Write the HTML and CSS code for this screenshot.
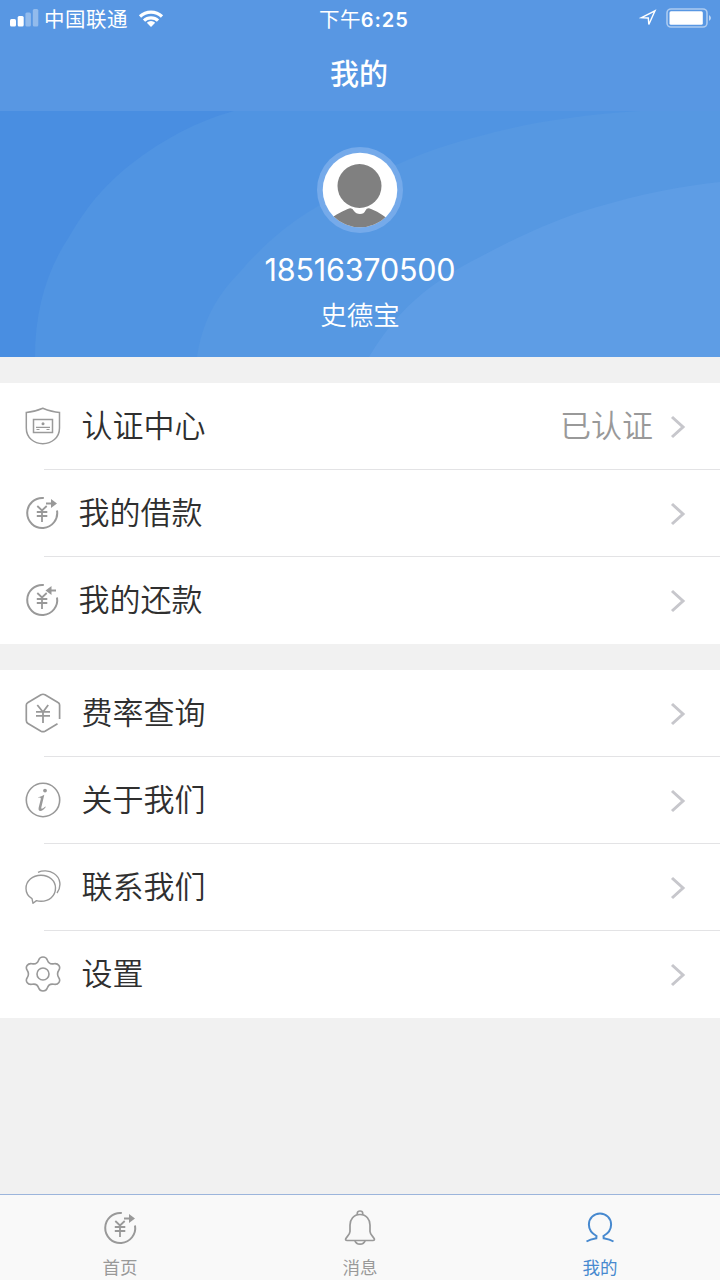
FILE: index.html
```html
<!DOCTYPE html>
<html lang="zh-CN">
<head>
<meta charset="utf-8">
<title>我的</title>
<link rel="stylesheet" href="styles.css">
</head>
<body>
<svg width="0" height="0" class="defs">
  <symbol id="chevron" viewBox="0 0 16 26"><path d="M2 3l11 10L2 23" fill="none" stroke="#c7c7cc" stroke-width="3"/></symbol>
  <symbol id="yen-out" viewBox="0 0 36 36"><g fill="none" stroke="currentColor" stroke-width="2"><path d="M18.8 3.1A15 15 0 1 0 32 15.500"/><path d="M12.300 11l4.700 4.500 4.700-4.500M11.800 17h10.500M11.800 21h10.500M17 15.500v11.500" stroke-width="1.800"/><path d="M21 8.500h7"/></g><path d="M26 4l6 4.500-6 4.500z" fill="currentColor"/></symbol>
  <symbol id="yen-in" viewBox="0 0 36 36"><g fill="none" stroke="currentColor" stroke-width="2"><path d="M18.800 3.100A15 15 0 1 0 32 15.500"/><path d="M12.300 11l4.700 4.500 4.700-4.500M11.800 17h10.500M11.800 21h10.500M17 15.500v11.500" stroke-width="1.800"/><path d="M25 8.500h6"/></g><path d="M26.500 4l-6 4.500 6 4.500z" fill="currentColor"/></symbol>
</svg>
<div class="app">
  <div class="top">
    <div class="status">
      <div class="carrier">
        <svg class="signal" width="29" height="18" viewBox="0 0 29 18"><g fill="#fff"><rect x="0" y="10" width="6" height="7.500" rx="1.500"/><rect x="7.700" y="7" width="6" height="10.500" rx="1.500"/><g opacity=".35"><rect x="15.400" y="3.500" width="5.500" height="14" rx="1.500"/><rect x="22.800" y="0" width="5.500" height="17.500" rx="1.500"/></g></g></svg>
        <span>中国联通</span>
        <svg class="wifi" width="26" height="19" viewBox="0 0 26 19"><path d="M2 7.500a16 16 0 0 1 22 0M6 11.700a10 10 0 0 1 14 0" fill="none" stroke="#fff" stroke-width="3.200"/><path d="M13 18l-4.200-4.200a6 6 0 0 1 8.400 0z" fill="#fff"/></svg>
      </div>
      <div class="clock">下午<b>6:25</b></div>
      <div class="power">
        <svg width="18" height="18" viewBox="0 0 18 18"><path d="M2.500 8.600L16 1.800 9.800 15.500 9.300 9z" fill="none" stroke="#fff" stroke-width="1.400"/></svg>
        <svg width="46" height="20" viewBox="0 0 46 20"><rect x="1" y="1" width="40" height="18" rx="4" fill="none" stroke="#fff" stroke-opacity=".5" stroke-width="1.600"/><rect x="3.500" y="3.300" width="33.300" height="13.500" rx="1.500" fill="#fff"/><path d="M43 7q4 3 0 6z" fill="#fff" opacity=".6"/></svg>
      </div>
    </div>
    <div class="title">我的</div>
  </div>
  <div class="hero">
    <svg class="arcs" viewBox="0 111 720 246" width="720" height="246">
      <path d="M35 357C35 310 47 270 69 237C88 205 100 192 117 176C150 147 190 123 234 111H720V357z" fill="#5094e2"/>
      <path d="M197 357C202 324 215 297 240 272C262 246 285 226 315 208C344 190 372 174 403 162C428 151 452 143 480 136C530 122 580 115 640 111H720V357z" fill="#5698e2"/>
      <path d="M369 357C384 332 401 311 423 293C442 278 460 267 480 257C515 238 556 219 597 207C638 195 680 186 720 182V357z" fill="#5e9de5"/>
    </svg>
    <svg class="avatar" width="86" height="86" viewBox="0 0 86 86"><defs><clipPath id="face"><circle cx="43" cy="43" r="37.300"/></clipPath></defs><circle cx="43" cy="43" r="43" fill="#75aaea"/><circle cx="43" cy="43" r="37.300" fill="#fff"/><g clip-path="url(#face)" fill="#808080"><circle cx="42.500" cy="39" r="22"/><path d="M12 73C18 68 27 63 33 61.200Q35.500 60.800 37 64Q39 67 43 67Q47 67 48.500 63.500Q49.500 61 52 61.200C59 63.500 67 68 74 75V86H12z"/></g></svg>
    <div class="phone">18516370500</div>
    <div class="name">史德宝</div>
  </div>
  <div class="card">
    <div class="row"><svg class="icon" width="36" height="38" viewBox="0 0 36 38"><g fill="none" stroke="#9a9a9a" stroke-width="1.500"><path d="M17.800 1.300Q9 5 1.300 5.500V21C1.300 31 9 36.500 17.800 36.700C26.500 36.500 34.500 31 34.500 21V5.500Q27 5 17.800 1.300z"/><rect x="8.500" y="12.500" width="19" height="13"/><path d="M11 20.300h14M11.500 22.500h3M21.500 22.500h3" stroke-width="1.200"/></g><circle cx="18" cy="16.700" r="1.500" fill="#999"/></svg><span class="label">认证中心</span><span class="state">已认证</span><svg class="go"><use href="#chevron"/></svg></div>
    <div class="row"><svg class="icon yen"><use href="#yen-out"/></svg><span class="label near">我的借款</span><svg class="go"><use href="#chevron"/></svg></div>
    <div class="row"><svg class="icon yen"><use href="#yen-in"/></svg><span class="label near">我的还款</span><svg class="go"><use href="#chevron"/></svg></div>
  </div>
  <div class="card">
    <div class="row"><svg class="icon" width="36" height="40" viewBox="0 0 36 40"><g fill="none" stroke="#999" stroke-width="1.700" stroke-linejoin="round"><path d="M34.600 26V12Q34.600 10.500 33 9.600L20 1.800Q18 .700 16 1.800L3 9.500Q1.300 10.500 1.300 12V27.500Q1.300 29.500 3 30.500L16 38.200Q18 39.200 20 38.200L32.500 30.800"/><path d="M12.300 12l5.700 7 5.200-7M11 18.800h14M11 22.800h14M18 19v11" stroke-width="1.800"/></g></svg><span class="label">费率查询</span><svg class="go"><use href="#chevron"/></svg></div>
    <div class="row"><svg class="icon" width="36" height="36" viewBox="0 0 36 36"><circle cx="18" cy="18" r="16.700" fill="none" stroke="#999" stroke-width="1.600"/><circle cx="20" cy="8.600" r="1.900" fill="#999"/><path d="M13.300 15.200Q16.500 14.300 19.300 12.700L16.300 25.500Q15.800 28.600 20.300 24.500L20.800 25Q17.800 29 15.300 29Q13 28.800 13.700 25.500L15.800 17Q16.300 14.800 13.300 15.800z" fill="#999"/></svg><span class="label">关于我们</span><svg class="go"><use href="#chevron"/></svg></div>
    <div class="row"><svg class="icon" width="36" height="36" viewBox="0 0 36 36"><g fill="none" stroke="#999" stroke-width="1.400" stroke-linejoin="round"><path d="M7 29.600C3 27.300 1 23.500 1 19.500C1 12 7.500 6.300 16 6.300C24.500 6.300 30.500 12 30.500 19C30.500 27 24 32.300 16 32.300Q13.500 32.300 11.500 31.600L8 34.300Z"/><path d="M13 3.300C17 1.500 24 1 29 4.500C36 9 36.500 18 32 24"/></g></svg><span class="label">联系我们</span><svg class="go"><use href="#chevron"/></svg></div>
    <div class="row"><svg class="icon" width="36" height="36" viewBox="0 0 36 36"><g fill="none" stroke="#999" stroke-width="1.600" stroke-linejoin="round"><path d="M13.700 4C15 0 21 0 22.300 4C23.500 7.500 25.500 8.500 29 7.700C33.500 7 36 11 33.800 14.300C32 17 32 19 33.800 21.700C36 25 33.500 29 29 28.300C25.500 27.500 23.500 28.500 22.300 32C21 36 15 36 13.700 32C12.500 28.500 10.500 27.500 7 28.300C2.500 29 0 25 2.200 21.700C4 19 4 17 2.200 14.300C0 11 2.500 7 7 7.700C10.500 8.500 12.500 7.500 13.700 4z"/><circle cx="18" cy="18" r="6"/></g></svg><span class="label">设置</span><svg class="go"><use href="#chevron"/></svg></div>
  </div>
  <div class="tabs">
    <div class="tab"><svg class="home" width="36" height="36"><use href="#yen-out"/></svg><span>首页</span></div>
    <div class="tab"><svg width="36" height="36" viewBox="0 0 36 36"><g fill="none" stroke="currentColor" stroke-width="1.700" stroke-linejoin="round"><path d="M15.300 5V3.200Q15.300 1 18 1T20.700 3.200V5"/><path d="M18 4.500C11.500 4.500 8 9.500 8 15V21.500C8 24.500 4.500 27 3.700 28.800Q3.200 30.500 5 30.500H31Q32.800 30.500 32.300 28.800C31.500 27 28 24.500 28 21.500V15C28 9.500 24.500 4.500 18 4.500z"/><path d="M12.800 30.500Q14 34.200 18 34.200T23.200 30.500"/></g></svg><span>消息</span></div>
    <div class="tab on"><svg width="36" height="36" viewBox="0 0 36 36"><path d="M4.500 31.500Q8 29.500 14.300 28.300L14.500 26C10 23.500 6.900 20 6.900 14.500A11.100 11.100 0 0 1 29.100 14.500C29.100 20 26 23.500 21.500 26L21.700 28.300Q28 29.500 31.500 31.500" fill="none" stroke="currentColor" stroke-width="2"/></svg><span>我的</span></div>
  </div>
</div>
</body>
</html>
```
FILE: styles.css
```css
* { box-sizing: border-box; }
body { margin: 0; font-family: "Noto Sans CJK SC", sans-serif; }
.defs { position: absolute; }
.app { width: 720px; height: 1280px; background: #f1f1f1; display: flex; flex-direction: column; overflow: hidden; }
.top { height: 111px; background: #5897e3; color: #fff; flex: none; }
.status { height: 36px; display: grid; grid-template-columns: 1fr auto 1fr; align-items: center; padding: 0 8px 0 10px; font-size: 20.500px; line-height: 36px; }
.carrier { display: flex; align-items: center; }
.carrier span { margin-left: 5px; letter-spacing: .500px; }
.wifi { margin-left: 10px; }
.clock { padding-left: 6px; letter-spacing: .300px; }
.clock b { font: 600 20px Inter, sans-serif; letter-spacing: 1px; }
.power { display: flex; align-items: center; justify-content: flex-end; gap: 9px; }
.title { height: 72px; line-height: 72px; padding-right: 2px; text-align: center; font-size: 29px; font-weight: 500; }
.hero { height: 245.500px; flex: none; position: relative; background: #498ee1; color: #fff; display: flex; flex-direction: column; align-items: center; }
.arcs { position: absolute; left: 0; top: 0; width: 720px; height: 246px; }
.avatar { position: relative; margin-top: 36px; }
.phone { position: relative; margin-top: 17px; font: 400 30.500px/40px Inter, sans-serif; letter-spacing: -.200px; }
.name { position: relative; font-size: 26.500px; font-weight: 350; line-height: 50px; margin-top: -1px; }
.card { margin-top: 26px; background: #fff; flex: none; }
.hero + .card { margin-top: 26.500px; }
.row { height: 87px; display: flex; align-items: center; padding: 0 34px 2px 25px; background: linear-gradient(#e3e3e5, #e3e3e5) 44px 100% / 100% 1px no-repeat; }
.row:last-child { background: none; }
.icon { flex: none; color: #999; }
.yen { width: 36px; height: 36px; margin-left: -.500px; }
.label { margin-left: 20.500px; padding-bottom: 3px; font-size: 31px; font-weight: 350; color: #2f2f2f; line-height: 44px; }
.near { margin-left: 18px; }
.state { margin-left: auto; margin-right: 17px; padding-bottom: 3px; font-size: 31px; font-weight: 350; color: #999; line-height: 44px; }
.go { width: 16px; height: 26px; margin: 2px 0 0 auto; }
.state + .go { margin-left: 0; }
.tabs { margin-top: auto; height: 86px; border-top: 1px solid #9cb5dc; background: #f9f9f9; display: grid; grid-template-columns: repeat(3, 1fr); color: #999; }
.tab { display: flex; flex-direction: column; align-items: center; padding-top: 15px; }
.tab span { font-size: 17.500px; line-height: 26px; margin-top: 8px; }
.home { margin-left: 1px; }
.on { color: #4789cf; }
```
